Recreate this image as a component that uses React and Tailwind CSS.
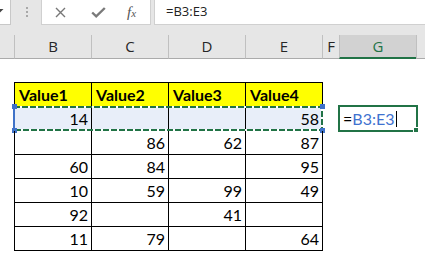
import React from 'react';

const cols = ['B', 'C', 'D', 'E'];
const rows = [
  ['14', '', '', '58'],
  ['', '86', '62', '87'],
  ['60', '84', '', '95'],
  ['10', '59', '99', '49'],
  ['92', '', '41', ''],
  ['11', '79', '', '64'],
];

// the marching ants + blue range handles over B3:E3
function Marquee() {
  return (
    <svg className="absolute left-[10px] top-[-5px]" width="316" height="33" viewBox="0 0 316 33">
      <rect x="4" y="5" width="308" height="23" fill="none" stroke="#ffffff" strokeWidth="2" />
      <rect x="4" y="5" width="308" height="23" fill="none" stroke="#217346" strokeWidth="2" strokeDasharray="6 2" />
      <line x1="4" y1="7" x2="4" y2="26" stroke="#3f72c8" strokeWidth="2" />
      <rect x="2" y="2" width="5" height="5" fill="#3f72c8" />
      <rect x="2" y="26" width="5" height="5" fill="#3f72c8" />
      <rect x="310" y="2" width="5" height="5" fill="#3f72c8" />
      <rect x="310" y="26" width="5" height="5" fill="#3f72c8" />
    </svg>
  );
}

function App() {
  return (
    <div className="w-[425px] h-[259px] overflow-hidden bg-white text-black">
      {/* formula bar */}
      <div className="flex h-[25px] bg-[#e6e6e6]">
        <div className="w-[11px] bg-white border-r border-b border-[#c8c8c8]">
          <svg width="10" height="24" viewBox="0 0 10 24">
            <polygon points="0,9 3.5,9 0,12.5" fill="#444" />
          </svg>
        </div>
        <div className="w-[30px] flex justify-center">
          <div className="flex flex-col gap-[2px] pt-[7px] pl-[1px]">
            <span className="block w-[2px] h-[2px] bg-[#a8a8a8]" />
            <span className="block w-[2px] h-[2px] bg-[#a8a8a8]" />
            <span className="block w-[2px] h-[2px] bg-[#a8a8a8]" />
          </div>
        </div>
        <div className="w-[110px] bg-white border-l border-r border-b border-[#d0d0d0] flex items-center">
          <svg className="ml-[13px]" width="11" height="11" viewBox="0 0 11 11">
            <path d="M1 1 L10 10 M10 1 L1 10" stroke="#777" strokeWidth="1.4" />
          </svg>
          <svg className="ml-[25px]" width="15" height="11" viewBox="0 0 15 11">
            <path d="M1.2 5.5 L5.2 9.3 L13.8 1" fill="none" stroke="#7a7a7a" strokeWidth="2.4" />
          </svg>
          <span className="ml-[21px] font-['Liberation_Serif',serif] italic text-[#555] text-[15px] leading-none">
            f<span className="text-[11px]">x</span>
          </span>
        </div>
        <div className="w-[3px]" />
        <div className="flex-1 bg-white border-l border-b border-[#d0d0d0] flex items-center pl-[11px] font-['Open_Sans',sans-serif] text-[13px] text-[#222]">
          =B3:E3
        </div>
      </div>
      <div className="h-[10px] bg-[#e6e6e6]" />

      {/* column headers */}
      <div className="flex h-[24px] bg-[#e6e6e6] font-['Open_Sans',sans-serif] text-[15px] text-[#262626]">
        <div className="w-[14px] border-b border-[#ababab]" />
        {cols.map((c) => (
          <div key={c} className="w-[77px] border-l border-b border-l-[#c0c0c0] border-b-[#ababab] flex items-center justify-center">
            {c}
          </div>
        ))}
        <div className="w-[17px] border-l border-b border-l-[#c0c0c0] border-b-[#ababab] flex items-center justify-center">F</div>
        <div className="w-[77px] bg-[#d2d2d2] border-l border-b-2 border-l-[#c0c0c0] border-b-[#217346] flex items-center justify-center text-[#217346]">
          G
        </div>
        <div className="flex-1 border-l border-b border-l-[#c0c0c0] border-b-[#ababab]" />
      </div>

      <div className="h-[23px]" />

      {/* table */}
      <div className="font-['Lato',sans-serif] text-[16px] leading-5">
        <div className="flex h-[25px]">
          <div className="w-[14px]" />
          {['Value1', 'Value2', 'Value3', 'Value4'].map((v, i) => (
            <div
              key={v}
              className={
                i === 0
                  ? 'w-[78px] bg-[#ffff00] border border-black flex items-center pl-[4px] font-bold'
                  : 'w-[77px] bg-[#ffff00] border-t border-r border-b border-black flex items-center pl-[4px] font-bold'
              }
            >
              {v}
            </div>
          ))}
        </div>
        {rows.map((r, ri) => (
          <div key={ri} className="relative flex h-[24px]">
            <div className="w-[14px]" />
            {r.map((v, i) => (
              <div
                key={i}
                className={
                  (i === 0 ? 'w-[78px] border-l ' : 'w-[77px] ') +
                  'border-r border-b border-black flex items-center justify-end pr-[3px] ' +
                  (ri === 0 ? 'bg-[#e8eef9]' : '')
                }
              >
                {v}
              </div>
            ))}
            {ri === 0 && (
              <>
                <div className="w-[15px]" />
                <div className="relative -mt-[2px] h-[27px] w-[80px] border-2 border-[#217346] bg-white flex items-center pl-[3px]">
                  <span>=</span>
                  <span className="text-[#3f72d0]">B3:E3</span>
                  <span className="ml-[2px] inline-block w-px h-[16px] bg-black" />
                  <span className="absolute -right-[3px] -bottom-[3px] w-[6px] h-[6px] bg-[#217346] border border-white" />
                </div>
                <Marquee />
              </>
            )}
          </div>
        ))}
      </div>
    </div>
  );
}

export default App;
